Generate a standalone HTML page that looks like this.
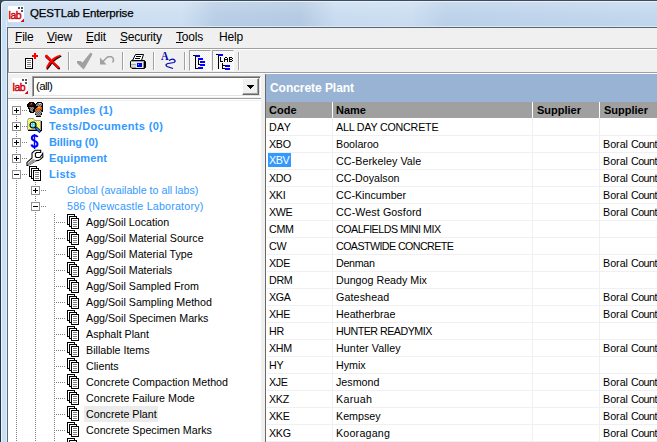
<!DOCTYPE html>
<html><head><meta charset="utf-8">
<style>
*{margin:0;padding:0;box-sizing:border-box}
html,body{width:657px;height:442px;overflow:hidden;background:#f0f0f0;font-family:"Liberation Sans",sans-serif;}
.a{position:absolute}
#win{position:absolute;left:0;top:0;width:657px;height:442px;overflow:hidden}
#title{left:0;top:0;width:657px;height:27px;background:linear-gradient(#cfe0f2,#c4d9ef 50%,#bfd5ee);border-top:1px solid #3c4c5e;border-left:1px solid #1e2a38;border-top-left-radius:5px;box-shadow:inset 1px 1px 0 #e8f1fa, inset 0 -1px 0 #dde9f5}
#ttext{left:30px;top:7px;font-size:11.5px;color:#000;letter-spacing:-0.15px;white-space:nowrap;-webkit-text-stroke:0.25px #000}
#lframe{left:0;top:20px;width:7px;height:422px;background:linear-gradient(90deg,#28323e 0,#28323e 1px,#e6f2fc 1px,#e6f2fc 2px,#c9e0f6 2px,#c9e0f6 6px,#e0effb 6px)}
#cframe{left:7px;top:27px;width:650px;height:415px;border-top:1px solid #5a6470;border-left:1px solid #5e6a76}
#menu{left:8px;top:28px;width:649px;height:20px;background:#f0f0f0}
.mi{position:absolute;top:2px;font-size:12px;letter-spacing:-0.2px;line-height:14px;color:#000;white-space:nowrap}
.ul{position:absolute;top:14px;height:1px;background:#000}
#tb{left:8px;top:48px;width:649px;height:26px;border-top:1px solid #a0a0a0;border-left:1px solid #a0a0a0;box-shadow:inset 1px 1px 0 #fff}
#tbb{left:8px;top:72px;width:649px;height:2px;border-top:1px solid #a0a0a0;border-bottom:1px solid #fff}
.sep{position:absolute;top:52px;width:2px;height:18px;border-left:1px solid #a0a0a0;border-right:1px solid #fff}
.pbtn{position:absolute;top:50px;width:22px;height:21px;border-top:1px solid #a0a0a0;border-left:1px solid #a0a0a0;border-right:1px solid #fff;border-bottom:1px solid #fff;
 background-color:#fff;background-image:linear-gradient(45deg,#f0f0f0 25%,transparent 25%,transparent 75%,#f0f0f0 75%),linear-gradient(45deg,#f0f0f0 25%,transparent 25%,transparent 75%,#f0f0f0 75%);background-size:2px 2px;background-position:0 0,1px 1px}
#combo{left:32px;top:76px;width:229px;height:21px;background:#fff;border-top:1px solid #a0a0a0;border-left:1px solid #a0a0a0;border-right:1px solid #fff;border-bottom:1px solid #fff;box-shadow:inset 1px 1px 0 #696969, inset -1px -1px 0 #e3e3e3}
#cbtn{left:242px;top:78px;width:17px;height:17px;background:#f0f0f0;border-top:1px solid #fff;border-left:1px solid #fff;border-right:1px solid #696969;border-bottom:1px solid #696969;box-shadow:inset -1px -1px 0 #a0a0a0}
#tree{left:8px;top:98px;width:253px;height:344px;background:#fff;border-top:1px solid #a0a0a0;box-shadow:inset 1px 0 0 #fff}
#tree:after{content:"";position:absolute;left:1px;top:1px;width:252px;height:1px;background:#f0f0f0}
.tl{position:absolute;white-space:nowrap;font-size:10.7px;color:#000}
.tb0{font-weight:bold;font-size:11px;letter-spacing:0.3px;color:#3399ff}
.tg{color:#3399ff;font-size:10.7px}
.vd{position:absolute;width:1px;background:repeating-linear-gradient(#808080 0 1px,transparent 1px 2px)}
.hd{position:absolute;height:1px;background:repeating-linear-gradient(90deg,#808080 0 1px,transparent 1px 2px)}
.box{position:absolute;width:9px;height:9px;border:1px solid #919191;background:#fff}
.box:before{content:"";position:absolute;left:1px;top:3px;width:5px;height:1px;background:#000}
.box.p:after{content:"";position:absolute;left:3px;top:1px;width:1px;height:5px;background:#000}
#rp{left:265px;top:74px;width:392px;height:368px;background:#fff;border-left:1px solid #696969;border-top:1px solid #a0a0a0}
#hdr{left:266px;top:74px;width:391px;height:28px;background:#98b3d3}
#htext{left:270px;top:81px;font-size:12px;font-weight:bold;letter-spacing:-0.05px;color:#fff;white-space:nowrap}
#colh{left:266px;top:102px;width:391px;height:16px;background:#a0a0a0}
.ch{position:absolute;top:104px;font-size:11px;font-weight:bold;color:#000;white-space:nowrap}
.cs{position:absolute;top:102px;width:1px;height:16px;background:#fff}
.gl{position:absolute;left:267px;width:390px;height:1px;background:#f0f0f0}
.gv{position:absolute;top:118px;width:1px;height:324px;background:#f0f0f0}
.c{position:absolute;font-size:10.7px;color:#000;white-space:nowrap}
</style></head><body>
<svg width="0" height="0" style="position:absolute"><defs>
 <symbol id="lab" viewBox="0 0 16 16">
  <rect x="0" y="0" width="16" height="16" fill="#fff"/>
  <text x="0.6" y="13" font-family="Liberation Sans" font-size="10.5" fill="#d0000c" stroke="#d0000c" stroke-width="0.45" letter-spacing="-0.5">lab</text>
  <g shape-rendering="crispEdges"><rect x="10" y="1" width="2" height="2" fill="#555"/><rect x="13" y="1" width="2" height="2" fill="#555"/><rect x="13" y="4" width="2" height="2" fill="#555"/></g>
  <path d="M16 12.5 L16 16 L12.5 16 Z" fill="#e00010"/>
 </symbol>
 <symbol id="lst" viewBox="0 0 14 16">
  <g shape-rendering="crispEdges">
  <rect x="0.5" y="0.5" width="7" height="10" fill="#fff" stroke="#000"/>
  <rect x="2.5" y="2.5" width="7" height="10" fill="#fff" stroke="#000"/>
  <rect x="4.5" y="4.5" width="7" height="10" fill="#fff" stroke="#000"/>
  <rect x="6" y="6" width="4" height="1" fill="#808080"/><rect x="6" y="8" width="4" height="1" fill="#808080"/><rect x="6" y="10" width="4" height="1" fill="#808080"/><rect x="6" y="12" width="4" height="1" fill="#808080"/>
  </g>
 </symbol>
</defs></svg>
<div id="win">
 <div class="a" style="left:0;top:0;width:10px;height:10px;background:#3a4c60"></div>
 <div id="title" class="a"></div>
 <div class="a" style="left:1px;top:2px;width:656px;height:24px;background:linear-gradient(90deg,rgba(255,255,255,0.12) 0,rgba(255,255,255,0.2) 180px,rgba(20,40,80,0.05) 215px,rgba(20,40,80,0.07) 300px,rgba(255,255,255,0.12) 335px,rgba(255,255,255,0.15) 410px,rgba(20,40,80,0.03) 445px,rgba(255,255,255,0) 657px)"></div>
 <div id="lframe" class="a"></div>
 <div id="cframe" class="a"></div>
 <!-- title icon -->
 <svg class="a" style="left:8px;top:6px" width="16" height="16" viewBox="0 0 16 16"><use href="#lab"/></svg>
 <div id="ttext" class="a">QESTLab Enterprise</div>

 <div id="menu" class="a">
  <div class="mi" style="left:7px">File</div><div class="ul" style="left:7px;width:6px"></div>
  <div class="mi" style="left:39px">View</div><div class="ul" style="left:39px;width:8px"></div>
  <div class="mi" style="left:78px">Edit</div><div class="ul" style="left:78px;width:7px"></div>
  <div class="mi" style="left:112px">Security</div><div class="ul" style="left:112px;width:7px"></div>
  <div class="mi" style="left:168px">Tools</div><div class="ul" style="left:168px;width:7px"></div>
  <div class="mi" style="left:211px">Help</div>
 </div>
 <div id="tb" class="a"></div>
 <div id="tbb" class="a"></div>
 <div class="sep" style="left:68px"></div>
 <div class="sep" style="left:122px"></div>
 <div class="sep" style="left:153px"></div>
 <div class="sep" style="left:184px"></div>
 <div class="sep" style="left:238px"></div>
 <div class="pbtn" style="left:189px"></div>
 <div class="pbtn" style="left:212px"></div>

 <!-- toolbar icons -->
 <svg class="a" style="left:24px;top:52px" width="16" height="18" viewBox="0 0 16 18" shape-rendering="crispEdges">
  <rect x="1.5" y="6.5" width="7" height="10" fill="#fff" stroke="#000"/>
  <rect x="3" y="8" width="4" height="1" fill="#808080"/><rect x="3" y="10" width="4" height="1" fill="#808080"/><rect x="3" y="12" width="4" height="1" fill="#808080"/><rect x="3" y="14" width="4" height="1" fill="#808080"/>
  <rect x="10" y="1" width="2" height="6" fill="#f00"/><rect x="8" y="3" width="6" height="2" fill="#f00"/>
 </svg>
 <svg class="a" style="left:44px;top:54px" width="18" height="16" viewBox="0 0 18 16">
  <g transform="translate(0.6,0.9)" fill="#000">
   <path d="M1 1.2 L3 0.8 L8.5 6.5 L15.5 13 L15 14.5 L13.5 14.3 L7 8 L1 2.8 Z"/>
   <path d="M16.5 0.8 L17 1.5 L12 4.5 L8.5 7.5 L5.5 11.5 L3 14.8 L2 14.6 L2.4 12.5 L5 8 L9 4 L13 1.8 Z"/>
  </g>
  <g fill="#f00">
   <path d="M1 1.2 L3 0.8 L8.5 6.5 L15.5 13 L15 14.5 L13.5 14.3 L7 8 L1 2.8 Z"/>
   <path d="M16.5 0.8 L17 1.5 L12 4.5 L8.5 7.5 L5.5 11.5 L3 14.8 L2 14.6 L2.4 12.5 L5 8 L9 4 L13 1.8 Z"/>
  </g>
 </svg>
 <svg class="a" style="left:76px;top:52px" width="18" height="18" viewBox="0 0 18 18">
  <path d="M1 9 L4.5 9 L6.5 10.5 L14.5 0.5 L16.5 2 L15 5 L9 15.5 L7.5 17.5 L1 11 Z" fill="#a0a0a0"/>
 </svg>
 <svg class="a" style="left:99px;top:55px" width="17" height="11" viewBox="0 0 17 11">
  <path d="M1 2.5 L1 9.5 L7.5 9.5 Z" fill="#a0a0a0"/>
  <path d="M4 6.5 L7.5 2.8 L9 1.8 L12.5 1.8 L14.3 3.5 L14.5 5.5 L13.5 7.5" fill="none" stroke="#a0a0a0" stroke-width="1.5"/>
 </svg>
 <svg class="a" style="left:129px;top:53px" width="18" height="17" viewBox="0 0 18 17">
  <path d="M6.5 1.5 L14.5 1.5 L12.5 7.5 L3.5 7.5 Z" fill="#fff" stroke="#000"/>
  <path d="M7 3.5 L12 3.5 M6 5.5 L11 5.5" stroke="#000" stroke-width="1"/>
  <path d="M2.5 7.5 L15.5 7.5 L16.5 9 L16.5 14.5 L15.5 15.5 L3 15.5 L1.5 14 L1.5 8.5 Z" fill="#a8a8a8" stroke="#000"/>
  <rect x="2" y="9" width="5" height="2" fill="#e8e8e8"/><rect x="2" y="12" width="5" height="2" fill="#d8d8d8"/>
  <rect x="7" y="9" width="7" height="6" fill="#e8e8dc"/><rect x="14" y="9" width="1" height="6" fill="#909090"/>
  <rect x="8" y="10" width="5" height="4" fill="#0000ff"/>
  <rect x="9" y="11" width="1" height="1" fill="#20e0ff"/>
  <rect x="15" y="8" width="1" height="7" fill="#000"/>
 </svg>
 <svg class="a" style="left:160px;top:52px" width="17" height="18" viewBox="0 0 17 18">
  <text x="1" y="8.3" font-family="Liberation Serif" font-weight="bold" font-size="11.5" fill="#0000b0" transform="scale(0.92 1)">A</text>
  <path d="M9 8.5 L11 7.5 Q13 6.5 14.5 8 Q16 9 14 10.5 L8 11.5 Q4.5 12.5 7 14.5 L10 15.5 L13 16.5" fill="none" stroke="#0000b0" stroke-width="1.25"/>
 </svg>
 <svg class="a" style="left:193px;top:54px" width="14" height="16" viewBox="0 0 14 16" shape-rendering="crispEdges">
  <rect x="0" y="1" width="2" height="1" fill="#000"/><rect x="2" y="1" width="5" height="2" fill="#0000ff"/>
  <rect x="2" y="2" width="1" height="13" fill="#000"/>
  <rect x="5" y="4" width="5" height="2" fill="#0000ff"/>
  <rect x="5" y="6" width="1" height="5" fill="#000"/><rect x="5" y="10" width="2" height="1" fill="#000"/>
  <rect x="7" y="7" width="5" height="2" fill="#0000ff"/><rect x="7" y="10" width="5" height="2" fill="#0000ff"/>
  <rect x="2" y="14" width="3" height="1" fill="#000"/><rect x="5" y="13" width="5" height="2" fill="#0000ff"/>
 </svg>
 <svg class="a" style="left:216px;top:53px" width="18" height="17" viewBox="0 0 18 17" shape-rendering="crispEdges">
  <rect x="0" y="1" width="2" height="1" fill="#000"/><rect x="2" y="1" width="5" height="2" fill="#0000ff"/>
  <rect x="2" y="2" width="1" height="14" fill="#000"/>
  <g fill="#000">
   <rect x="4" y="4" width="1" height="5"/><rect x="4" y="8" width="3" height="1"/>
   <rect x="8" y="5" width="1" height="4"/><rect x="11" y="5" width="1" height="4"/><rect x="9" y="4" width="2" height="1"/><rect x="8" y="6" width="4" height="1"/>
   <rect x="13" y="4" width="1" height="5"/><rect x="13" y="4" width="3" height="1"/><rect x="13" y="6" width="3" height="1"/><rect x="13" y="8" width="3" height="1"/><rect x="16" y="5" width="1" height="1"/><rect x="16" y="7" width="1" height="1"/>
   <rect x="6" y="10" width="1" height="6"/><rect x="6" y="12" width="3" height="1"/><rect x="6" y="15" width="3" height="1"/>
  </g>
  <rect x="9" y="12" width="5" height="2" fill="#0000ff"/><rect x="9" y="15" width="5" height="2" fill="#0000ff"/>
 </svg>

 <!-- lab icon in combo row -->
 <svg class="a" style="left:12px;top:78px" width="16" height="16" viewBox="0 0 16 16"><use href="#lab"/></svg>
 <div id="combo" class="a"></div>
 <div class="a" style="left:36px;top:79px;font-size:11.5px;line-height:14px;letter-spacing:-0.6px;color:#000">(all)</div>
 <div id="cbtn" class="a"></div>
 <svg class="a" style="left:247px;top:85px" width="7" height="4" shape-rendering="crispEdges"><rect x="0" y="0" width="7" height="1"/><rect x="1" y="1" width="5" height="1"/><rect x="2" y="2" width="3" height="1"/><rect x="3" y="3" width="1" height="1"/></svg>

 <div id="tree" class="a"></div>
 <!-- right panel -->
 <div id="rp" class="a"></div>
 <div id="hdr" class="a"></div>
 <div id="htext" class="a">Concrete Plant</div>
 <div id="colh" class="a"></div>
 <div class="ch" style="left:269px">Code</div>
 <div class="cs" style="left:332px"></div>
 <div class="ch" style="left:336px">Name</div>
 <div class="cs" style="left:532px"></div>
 <div class="ch" style="left:537px">Supplier</div>
 <div class="cs" style="left:599px"></div>
 <div class="ch" style="left:604px">Supplier</div>
 <div class="gl" style="top:135px"></div>
 <div class="c" style="left:269px;top:121px;letter-spacing:0.4px">DAY</div>
 <div class="c" style="left:336px;top:121px;letter-spacing:-0.2px">ALL DAY CONCRETE</div>
 <div class="gl" style="top:152px"></div>
 <div class="c" style="left:269px;top:138px;letter-spacing:-0.3px">XBO</div>
 <div class="c" style="left:336px;top:138px">Boolaroo</div>
 <div class="c" style="left:603px;top:138px">Boral <span style="letter-spacing:-0.5px">Country</span></div>
 <div class="gl" style="top:169px"></div>
 <div class="a" style="left:268px;top:153px"></div>
 <div class="a" style="left:268px;top:152px;width:23px;height:14px;background:#3399ff;margin-top:1px"></div>
 <div class="c" style="left:269px;top:154px;color:#fff;letter-spacing:-0.4px">XBV</div>
 <div class="c" style="left:336px;top:155px;letter-spacing:0.07px">CC-Berkeley Vale</div>
 <div class="c" style="left:603px;top:155px">Boral <span style="letter-spacing:-0.5px">Country</span></div>
 <div class="gl" style="top:186px"></div>
 <div class="c" style="left:269px;top:172px;letter-spacing:-0.3px">XDO</div>
 <div class="c" style="left:336px;top:172px">CC-Doyalson</div>
 <div class="c" style="left:603px;top:172px">Boral <span style="letter-spacing:-0.5px">Country</span></div>
 <div class="gl" style="top:203px"></div>
 <div class="c" style="left:269px;top:189px;letter-spacing:-0.3px">XKI</div>
 <div class="c" style="left:336px;top:189px">CC-Kincumber</div>
 <div class="c" style="left:603px;top:189px">Boral <span style="letter-spacing:-0.5px">Country</span></div>
 <div class="gl" style="top:220px"></div>
 <div class="c" style="left:269px;top:206px;letter-spacing:-0.3px">XWE</div>
 <div class="c" style="left:336px;top:206px;letter-spacing:0.1px">CC-West Gosford</div>
 <div class="c" style="left:603px;top:206px">Boral <span style="letter-spacing:-0.5px">Country</span></div>
 <div class="gl" style="top:237px"></div>
 <div class="c" style="left:269px;top:223px;letter-spacing:-0.3px">CMM</div>
 <div class="c" style="left:336px;top:223px;letter-spacing:-0.5px">COALFIELDS MINI MIX</div>
 <div class="gl" style="top:254px"></div>
 <div class="c" style="left:269px;top:240px;letter-spacing:-0.3px">CW</div>
 <div class="c" style="left:336px;top:240px;letter-spacing:-0.58px">COASTWIDE CONCRETE</div>
 <div class="gl" style="top:271px"></div>
 <div class="c" style="left:269px;top:257px;letter-spacing:-0.3px">XDE</div>
 <div class="c" style="left:336px;top:257px;letter-spacing:-0.3px">Denman</div>
 <div class="c" style="left:603px;top:257px">Boral <span style="letter-spacing:-0.5px">Country</span></div>
 <div class="gl" style="top:288px"></div>
 <div class="c" style="left:269px;top:274px;letter-spacing:-0.3px">DRM</div>
 <div class="c" style="left:336px;top:274px">Dungog Ready Mix</div>
 <div class="gl" style="top:305px"></div>
 <div class="c" style="left:269px;top:291px;letter-spacing:-0.3px">XGA</div>
 <div class="c" style="left:336px;top:291px;letter-spacing:0.12px">Gateshead</div>
 <div class="c" style="left:603px;top:291px">Boral <span style="letter-spacing:-0.5px">Country</span></div>
 <div class="gl" style="top:322px"></div>
 <div class="c" style="left:269px;top:308px;letter-spacing:-0.3px">XHE</div>
 <div class="c" style="left:336px;top:308px">Heatherbrae</div>
 <div class="c" style="left:603px;top:308px">Boral <span style="letter-spacing:-0.5px">Country</span></div>
 <div class="gl" style="top:339px"></div>
 <div class="c" style="left:269px;top:325px;letter-spacing:-0.3px">HR</div>
 <div class="c" style="left:336px;top:325px;letter-spacing:-0.5px">HUNTER READYMIX</div>
 <div class="gl" style="top:356px"></div>
 <div class="c" style="left:269px;top:342px;letter-spacing:-0.3px">XHM</div>
 <div class="c" style="left:336px;top:342px;letter-spacing:0.1px">Hunter Valley</div>
 <div class="c" style="left:603px;top:342px">Boral <span style="letter-spacing:-0.5px">Country</span></div>
 <div class="gl" style="top:373px"></div>
 <div class="c" style="left:269px;top:359px;letter-spacing:-0.3px">HY</div>
 <div class="c" style="left:336px;top:359px">Hymix</div>
 <div class="gl" style="top:390px"></div>
 <div class="c" style="left:269px;top:376px;letter-spacing:-0.3px">XJE</div>
 <div class="c" style="left:336px;top:376px">Jesmond</div>
 <div class="c" style="left:603px;top:376px">Boral <span style="letter-spacing:-0.5px">Country</span></div>
 <div class="gl" style="top:407px"></div>
 <div class="c" style="left:269px;top:393px;letter-spacing:-0.3px">XKZ</div>
 <div class="c" style="left:336px;top:393px;letter-spacing:0.3px">Karuah</div>
 <div class="c" style="left:603px;top:393px">Boral <span style="letter-spacing:-0.5px">Country</span></div>
 <div class="gl" style="top:424px"></div>
 <div class="c" style="left:269px;top:410px;letter-spacing:-0.3px">XKE</div>
 <div class="c" style="left:336px;top:410px">Kempsey</div>
 <div class="c" style="left:603px;top:410px">Boral <span style="letter-spacing:-0.5px">Country</span></div>
 <div class="gl" style="top:441px"></div>
 <div class="c" style="left:269px;top:427px;letter-spacing:-0.3px">XKG</div>
 <div class="c" style="left:336px;top:427px;letter-spacing:0.2px">Kooragang</div>
 <div class="c" style="left:603px;top:427px">Boral <span style="letter-spacing:-0.5px">Country</span></div>
 <div class="gv" style="left:332px"></div>
 <div class="gv" style="left:532px"></div>
 <div class="gv" style="left:599px"></div>
 
 <!-- level0 icons -->
 <svg class="a" style="left:26px;top:101px" width="18" height="18" viewBox="0 0 18 18" shape-rendering="crispEdges">
  <defs><pattern id="gd" width="2" height="2" patternUnits="userSpaceOnUse"><rect width="2" height="2" fill="#606060"/><rect width="1" height="1" fill="#989898"/><rect x="1" y="1" width="1" height="1" fill="#989898"/></pattern></defs>
  <path d="M1 4 L3 1 L7 1 L9 3 L9 7 L8 12 L4 12 L2 7 Z" fill="#000"/>
  <path d="M2 4 L4 2 L7 2 L8 4 L6 5 L3 5 Z" fill="#3c0800"/>
  <rect x="5" y="2" width="1" height="1" fill="#e07020"/><rect x="4" y="3" width="2" height="1" fill="#902000"/>
  <path d="M3 6 L8 6 L7 11 L5 11 Z" fill="url(#gd)"/>
  <path d="M9 3 L11 1 L15 1 L17 3 L17 9 L15 16 L10 16 L8 9 Z" fill="#000"/>
  <path d="M10 3 L11 2 L15 2 L16 3 L16 5 L10 5 Z" fill="url(#gd)"/>
  <rect x="13" y="2" width="2" height="1" fill="#d8d8d8"/>
  <path d="M8 9 L10 7 L12 5 L14 5 L16 7 L16 9 L13 10 L9 10 Z" fill="#e06818"/>
  <rect x="12" y="6" width="2" height="1" fill="#ffb030"/><rect x="10" y="8" width="1" height="1" fill="#a03000"/><rect x="14" y="8" width="1" height="1" fill="#803000"/>
  <path d="M9 10 L16 10 L15 15 L10 15 Z" fill="url(#gd)"/>
 </svg>
 <svg class="a" style="left:27px;top:117px" width="16" height="17" viewBox="0 0 16 17">
  <defs><pattern id="dith" width="2" height="2" patternUnits="userSpaceOnUse"><rect width="2" height="2" fill="#f8f000"/><rect width="1" height="1" fill="#ffffff"/><rect x="1" y="1" width="1" height="1" fill="#ffffc0"/></pattern>
  <pattern id="dithc" width="2" height="2" patternUnits="userSpaceOnUse"><rect width="2" height="2" fill="#30e0f0"/><rect width="1" height="1" fill="#e0ffff"/></pattern></defs>
  <path d="M0.5 3.5 L1.5 1.5 L6.5 1.5 L7.5 3.5 L13.5 3.5 L13.5 12.5 L0.5 12.5 Z" fill="url(#dith)" stroke="#a0a0a0"/>
  <rect x="14" y="4" width="1" height="10" fill="#000"/><rect x="1" y="13" width="14" height="1" fill="#000"/>
  <circle cx="6" cy="8" r="3" fill="url(#dithc)" stroke="#000" stroke-width="1.2"/>
  <path d="M8.5 10.5 L13.5 15" stroke="#000" stroke-width="3"/>
  <path d="M8.8 10.8 L13.2 14.7" stroke="#1050ff" stroke-width="1.6"/><path d="M9.5 11.2 L12.8 14.1" stroke="#40d0ff" stroke-width="0.6"/>
 </svg>
 <svg class="a" style="left:30px;top:133px" width="10" height="17" viewBox="0 0 10 17">
  <path d="M7.4 4.2 C7.2 3, 6.2 2.5, 4.5 2.5 C3 2.5, 1.8 3.3, 1.8 5 C1.8 6.8, 3.3 7.4, 4.6 7.9 C6 8.4, 7.5 9, 7.5 11 C7.5 12.8, 6.2 13.8, 4.5 13.8 C2.9 13.8, 1.8 13, 1.5 11.5" fill="none" stroke="#0000ff" stroke-width="2"/>
  <path d="M4.5 1 L4.5 16" stroke="#0000ff" stroke-width="1.4"/>
 </svg>
 <svg class="a" style="left:26px;top:149px" width="18" height="18" viewBox="0 0 18 18">
  <path d="M9.2 1.2 L14.7 1.2 L14.7 3.5 L10.4 3.5 L9.4 4.5 L9.4 7.5 L10.4 8.5 L13.9 8.5 L15.7 6 L16.7 4.5 L16.9 8 L14.4 10.4 L12.4 11.4 L9.9 11.7 L2 16.4 L1 16.4 L1 13.4 L6 9 L6 4 Z" fill="#fff" stroke="#000" stroke-width="1.1"/>
  <path d="M2 15.8 L9.8 11.2 L7 10 L1.5 14.5 Z" fill="#989898"/>
  <path d="M2 16.4 L9.9 11.7" stroke="#b0b0b0" stroke-width="1"/>
 </svg>
 <svg class="a" style="left:29px;top:166px" width="14" height="16"><use href="#lst"/></svg>
<div class="box p" style="left:12px;top:106px"></div>
 <div class="hd" style="left:22px;top:110px;width:5px"></div>
 <div class="tl tb0" style="left:49px;top:104px;letter-spacing:0.2px">Samples (1)</div>
 <div class="box p" style="left:12px;top:122px"></div>
 <div class="hd" style="left:22px;top:126px;width:5px"></div>
 <div class="tl tb0" style="left:49px;top:120px;letter-spacing:0.36px">Tests/Documents (0)</div>
 <div class="box p" style="left:12px;top:138px"></div>
 <div class="hd" style="left:22px;top:142px;width:5px"></div>
 <div class="tl tb0" style="left:49px;top:136px;letter-spacing:-0.1px">Billing (0)</div>
 <div class="box p" style="left:12px;top:154px"></div>
 <div class="hd" style="left:22px;top:158px;width:5px"></div>
 <div class="tl tb0" style="left:49px;top:152px;letter-spacing:0.15px">Equipment</div>
 <div class="box" style="left:12px;top:170px"></div>
 <div class="hd" style="left:22px;top:174px;width:5px"></div>
 <div class="tl tb0" style="left:49px;top:168px;letter-spacing:0.3px">Lists</div>
 <div class="vd" style="left:16px;top:116px;height:7px"></div>
 <div class="vd" style="left:16px;top:132px;height:7px"></div>
 <div class="vd" style="left:16px;top:148px;height:7px"></div>
 <div class="vd" style="left:16px;top:164px;height:7px"></div>
 <div class="vd" style="left:16px;top:180px;height:262px"></div>
 <div class="box p" style="left:31px;top:186px"></div>
 <div class="hd" style="left:41px;top:190px;width:5px"></div>
 <div class="tl tg" style="left:67px;top:184px">Global (available to all labs)</div>
 <div class="box" style="left:31px;top:202px"></div>
 <div class="hd" style="left:41px;top:206px;width:5px"></div>
 <div class="tl tg" style="left:67px;top:200px;letter-spacing:0.2px">586 (Newcastle Laboratory)</div>
 <div class="vd" style="left:35px;top:182px;height:3px"></div>
 <div class="vd" style="left:35px;top:196px;height:5px"></div>
 <div class="vd" style="left:35px;top:212px;height:230px"></div>
 <div class="vd" style="left:54px;top:214px;height:228px"></div>
 <div class="hd" style="left:56px;top:222px;width:9px"></div>
 <svg class="a" style="left:67px;top:214px" width="14" height="16"><use href="#lst"/></svg>
 <div class="tl" style="left:86px;top:216px">Agg/Soil Location</div>
 <div class="hd" style="left:56px;top:238px;width:9px"></div>
 <svg class="a" style="left:67px;top:230px" width="14" height="16"><use href="#lst"/></svg>
 <div class="tl" style="left:86px;top:232px">Agg/Soil Material Source</div>
 <div class="hd" style="left:56px;top:254px;width:9px"></div>
 <svg class="a" style="left:67px;top:246px" width="14" height="16"><use href="#lst"/></svg>
 <div class="tl" style="left:86px;top:248px">Agg/Soil Material Type</div>
 <div class="hd" style="left:56px;top:270px;width:9px"></div>
 <svg class="a" style="left:67px;top:262px" width="14" height="16"><use href="#lst"/></svg>
 <div class="tl" style="left:86px;top:264px">Agg/Soil Materials</div>
 <div class="hd" style="left:56px;top:286px;width:9px"></div>
 <svg class="a" style="left:67px;top:278px" width="14" height="16"><use href="#lst"/></svg>
 <div class="tl" style="left:86px;top:280px">Agg/Soil Sampled From</div>
 <div class="hd" style="left:56px;top:302px;width:9px"></div>
 <svg class="a" style="left:67px;top:294px" width="14" height="16"><use href="#lst"/></svg>
 <div class="tl" style="left:86px;top:296px">Agg/Soil Sampling Method</div>
 <div class="hd" style="left:56px;top:318px;width:9px"></div>
 <svg class="a" style="left:67px;top:310px" width="14" height="16"><use href="#lst"/></svg>
 <div class="tl" style="left:86px;top:312px">Agg/Soil Specimen Marks</div>
 <div class="hd" style="left:56px;top:334px;width:9px"></div>
 <svg class="a" style="left:67px;top:326px" width="14" height="16"><use href="#lst"/></svg>
 <div class="tl" style="left:86px;top:328px">Asphalt Plant</div>
 <div class="hd" style="left:56px;top:350px;width:9px"></div>
 <svg class="a" style="left:67px;top:342px" width="14" height="16"><use href="#lst"/></svg>
 <div class="tl" style="left:86px;top:344px">Billable Items</div>
 <div class="hd" style="left:56px;top:366px;width:9px"></div>
 <svg class="a" style="left:67px;top:358px" width="14" height="16"><use href="#lst"/></svg>
 <div class="tl" style="left:86px;top:360px">Clients</div>
 <div class="hd" style="left:56px;top:382px;width:9px"></div>
 <svg class="a" style="left:67px;top:374px" width="14" height="16"><use href="#lst"/></svg>
 <div class="tl" style="left:86px;top:376px">Concrete Compaction Method</div>
 <div class="hd" style="left:56px;top:398px;width:9px"></div>
 <svg class="a" style="left:67px;top:390px" width="14" height="16"><use href="#lst"/></svg>
 <div class="tl" style="left:86px;top:392px">Concrete Failure Mode</div>
 <div class="hd" style="left:56px;top:414px;width:9px"></div>
 <svg class="a" style="left:67px;top:406px" width="14" height="16"><use href="#lst"/></svg>
 <div class="a" style="left:84px;top:406px;width:74px;height:16px;background:#ececec"></div>
 <div class="tl" style="left:86px;top:408px">Concrete Plant</div>
 <div class="hd" style="left:56px;top:430px;width:9px"></div>
 <svg class="a" style="left:67px;top:422px" width="14" height="16"><use href="#lst"/></svg>
 <div class="tl" style="left:86px;top:424px">Concrete Specimen Marks</div>
 <div class="hd" style="left:56px;top:446px;width:9px"></div>
 <svg class="a" style="left:67px;top:438px" width="14" height="16"><use href="#lst"/></svg>
</div>
</body></html>
